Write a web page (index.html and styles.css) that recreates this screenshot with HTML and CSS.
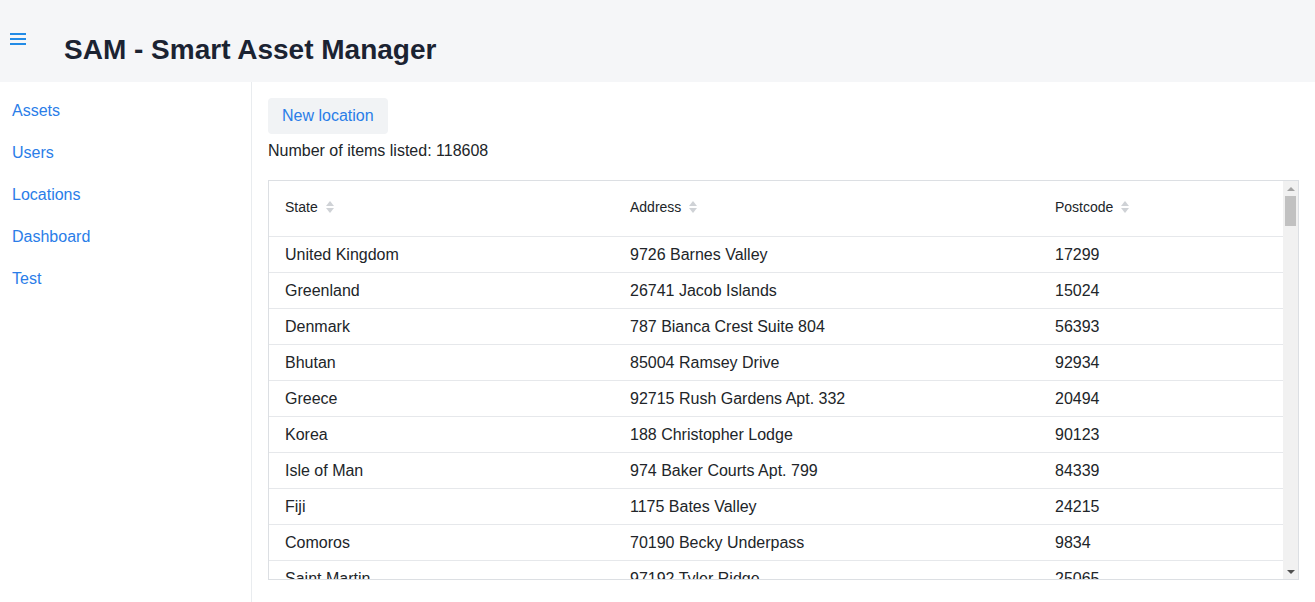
FILE: index.html
```html
<!DOCTYPE html>
<html lang="en">
<head>
<meta charset="utf-8">
<title>SAM - Smart Asset Manager</title>
<link rel="stylesheet" href="styles.css">
</head>
<body>
<header class="topbar">
  <button class="burger" aria-label="Toggle navigation">
    <svg width="16" height="14" viewBox="0 0 16 14"><rect x="0" y="1" width="16" height="2" fill="#228be6"/><rect x="0" y="6" width="16" height="2" fill="#228be6"/><rect x="0" y="11" width="16" height="2" fill="#228be6"/></svg>
  </button>
  <h1 class="title">SAM - Smart Asset Manager</h1>
</header>
<div class="layout">
  <nav class="sidebar">
    <a href="#">Assets</a>
    <a href="#">Users</a>
    <a href="#">Locations</a>
    <a href="#">Dashboard</a>
    <a href="#">Test</a>
  </nav>
  <main class="main">
    <button class="btn">New location</button>
    <p class="count">Number of items listed: 118608</p>
    <div class="table-wrap">
      <div class="scroll-area">
        <table class="grid">
          <colgroup><col class="c1"><col class="c2"><col class="c3"></colgroup>
          <thead>
            <tr>
              <th><span>State</span><i class="sort"></i></th>
              <th><span>Address</span><i class="sort"></i></th>
              <th><span>Postcode</span><i class="sort"></i></th>
            </tr>
          </thead>
          <tbody>
            <tr><td>United Kingdom</td><td>9726 Barnes Valley</td><td>17299</td></tr>
            <tr><td>Greenland</td><td>26741 Jacob Islands</td><td>15024</td></tr>
            <tr><td>Denmark</td><td>787 Bianca Crest Suite 804</td><td>56393</td></tr>
            <tr><td>Bhutan</td><td>85004 Ramsey Drive</td><td>92934</td></tr>
            <tr><td>Greece</td><td>92715 Rush Gardens Apt. 332</td><td>20494</td></tr>
            <tr><td>Korea</td><td>188 Christopher Lodge</td><td>90123</td></tr>
            <tr><td>Isle of Man</td><td>974 Baker Courts Apt. 799</td><td>84339</td></tr>
            <tr><td>Fiji</td><td>1175 Bates Valley</td><td>24215</td></tr>
            <tr><td>Comoros</td><td>70190 Becky Underpass</td><td>9834</td></tr>
            <tr><td>Saint Martin</td><td>97192 Tyler Ridge</td><td>25065</td></tr>
            <tr><td>Norway</td><td>412 Walker Mews</td><td>31870</td></tr>
          </tbody>
        </table>
      </div>
      <div class="scrollbar" aria-hidden="true">
        <span class="sb-arrow up"></span>
        <span class="sb-track"><span class="sb-thumb"></span></span>
        <span class="sb-arrow down"></span>
      </div>
    </div>
  </main>
</div>
</body>
</html>
```
FILE: styles.css
```css
* { box-sizing: border-box; }
html, body { margin: 0; padding: 0; }
body {
  font-family: "Liberation Sans", Arial, sans-serif;
  color: #212529;
  background: #fff;
  height: 602px;
  overflow: hidden;
}
.topbar {
  height: 82px;
  background: #f5f6f8;
  display: flex;
  align-items: flex-start;
}
.burger {
  margin: 32px 0 0 10px;
  padding: 0;
  border: 0;
  background: none;
  width: 16px;
  height: 14px;
  display: flex;
}
.title {
  margin: 34px 0 0 38px;
  font-size: 28px;
  line-height: 32px;
  font-weight: 700;
  color: #1b2332;
}
.layout {
  display: flex;
  height: 520px;
}
.sidebar {
  width: 252px;
  flex: none;
  border-right: 1px solid #e9ecef;
  padding-top: 8px;
  display: flex;
  flex-direction: column;
}
.sidebar a {
  display: block;
  height: 42px;
  line-height: 42px;
  padding-left: 12px;
  font-size: 16px;
  color: #2a7de8;
  text-decoration: none;
}
.main {
  flex: 1;
  padding: 16px 16px 0 16px;
  min-width: 0;
}
.btn {
  height: 36px;
  padding: 0 14px;
  border: 0;
  border-radius: 4px;
  background: #f1f3f5;
  color: #2a7de8;
  font-family: inherit;
  font-size: 16px;
}
.count {
  margin: 8px 0 0 0;
  font-size: 16px;
  line-height: 18px;
}
.table-wrap {
  margin-top: 20px;
  width: 1031px;
  height: 400px;
  border: 1px solid #dcdfe3;
  display: flex;
}
.scroll-area {
  flex: 1;
  min-width: 0;
  overflow: hidden;
}
.scrollbar {
  width: 15px;
  flex: none;
  background: #f1f1f1;
  display: flex;
  flex-direction: column;
}
.sb-arrow {
  height: 15px;
  flex: none;
  display: flex;
  align-items: center;
  justify-content: center;
}
.sb-arrow::before {
  content: "";
  border-left: 4px solid transparent;
  border-right: 4px solid transparent;
}
.sb-arrow.up::before { border-bottom: 4px solid #a3a3a3; }
.sb-arrow.down::before { border-top: 4px solid #505050; }
.sb-track {
  flex: 1;
  display: flex;
  flex-direction: column;
  padding: 0 2px;
}
.sb-thumb {
  height: 30px;
  background: #c1c1c1;
}
.grid {
  width: 100%;
  border-collapse: collapse;
  table-layout: fixed;
}
.c1 { width: 345px; }
.c2 { width: 425px; }
.c3 { width: auto; }
.grid th {
  height: 55px;
  padding: 0 16px 3px 16px;
  text-align: left;
  font-weight: 400;
  font-size: 14px;
  color: #212529;
  border-bottom: 1px solid #e6e8eb;
  vertical-align: middle;
}
.grid th span { vertical-align: middle; }
.sort {
  display: inline-block;
  vertical-align: middle;
  margin-left: 8px;
  width: 9px;
  height: 14px;
  position: relative;
}
.sort::before, .sort::after {
  content: "";
  position: absolute;
  left: 0;
  border-left: 4.5px solid transparent;
  border-right: 4.5px solid transparent;
}
.sort::before { top: 1px; border-bottom: 5px solid #cfd2d6; }
.sort::after { top: 8px; border-top: 5px solid #cfd2d6; }
.grid td {
  height: 36px;
  padding: 1px 16px 0 16px;
  font-size: 16px;
  border-bottom: 1px solid #e6e8eb;
  white-space: nowrap;
}
```
